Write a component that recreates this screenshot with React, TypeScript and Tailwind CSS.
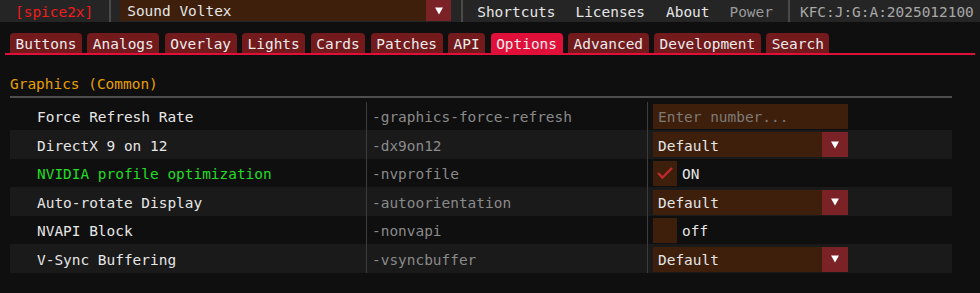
import React from 'react';

const tabs = ['Buttons', 'Analogs', 'Overlay', 'Lights', 'Cards', 'Patches', 'API', 'Options', 'Advanced', 'Development', 'Search'];

type Row = {
  name: string;
  param: string;
  kind: 'input' | 'combo' | 'check';
  value?: string;
  on?: boolean;
  green?: boolean;
};

const rows: Row[] = [
  { name: 'Force Refresh Rate', param: '-graphics-force-refresh', kind: 'input' },
  { name: 'DirectX 9 on 12', param: '-dx9on12', kind: 'combo', value: 'Default' },
  { name: 'NVIDIA profile optimization', param: '-nvprofile', kind: 'check', on: true, green: true },
  { name: 'Auto-rotate Display', param: '-autoorientation', kind: 'combo', value: 'Default' },
  { name: 'NVAPI Block', param: '-nonvapi', kind: 'check', on: false },
  { name: 'V-Sync Buffering', param: '-vsyncbuffer', kind: 'combo', value: 'Default' },
];

function Arrow() {
  return (
    <div className="flex w-[26px] h-full items-center justify-center bg-[#7a2226]">
      <svg width="10" height="8" viewBox="0 0 10 8">
        <polygon points="1,0.5 9,0.5 5,7.5" fill="#ffffff" />
      </svg>
    </div>
  );
}

function Combo({ value }: { value: string }) {
  return (
    <div className="flex h-[25px] w-[195px] bg-[#3d1f0c]">
      <div className="flex-1 flex items-center pl-[5px] pt-[2px] text-[#e6e6e6]">{value}</div>
      <Arrow />
    </div>
  );
}

function Control({ row }: { row: Row }) {
  if (row.kind === 'input') {
    return (
      <div className="flex h-[25px] w-[195px] items-center bg-[#3d1f0c] pl-[5px] pt-[2px] text-[#7f7a76]">
        Enter number...
      </div>
    );
  }
  if (row.kind === 'combo') {
    return <Combo value={row.value || ''} />;
  }
  return (
    <div className="flex items-center">
      <div className="flex h-[25px] w-[24px] items-center justify-center bg-[#3d1f0c]">
        {row.on && (
          <svg width="18" height="14" viewBox="0 0 18 14">
            <polyline points="2,7 6.5,11.5 16,2" fill="none" stroke="#c02a2e" strokeWidth="2.4" />
          </svg>
        )}
      </div>
      <span className="ml-[5px] pt-[2px] text-[#e6e6e6]">{row.on ? 'ON' : 'off'}</span>
    </div>
  );
}

export default function App() {
  return (
    <div
      className="w-[980px] h-[293px] overflow-hidden bg-[#0f0f0f] text-[14.45px] leading-none"
      style={{ fontFamily: '"DejaVu Sans Mono", "Liberation Mono", monospace' }}
    >
      {/* menu bar */}
      <div className="flex h-[22px] items-stretch bg-[#252525] text-[#e6e6e6]">
        <div className="flex items-center pl-[15px] pt-[2px] text-[#f01c1c]">[spice2x]</div>
        <div className="ml-[16px] w-[2px] bg-[#4a4a4a]" />
        <div className="ml-[9px] flex h-[21px] w-[331px] bg-[#3d1f0c]">
          <div className="flex-1 flex items-center pl-[7px] pt-[2px]">Sound Voltex</div>
          <div className="flex w-[25px] items-center justify-center bg-[#7a2226]">
            <svg width="10" height="8" viewBox="0 0 10 8">
              <polygon points="1,0.5 9,0.5 5,7.5" fill="#ffffff" />
            </svg>
          </div>
        </div>
        <div className="ml-[10px] w-[2px] bg-[#4a4a4a]" />
        <div className="ml-[14px] flex items-center pt-[2px]">Shortcuts</div>
        <div className="ml-[20px] flex items-center pt-[2px]">Licenses</div>
        <div className="ml-[21px] flex items-center pt-[2px]">About</div>
        <div className="ml-[20px] flex items-center pt-[2px] text-[#9a9a9a]">Power</div>
        <div className="ml-[15px] w-[2px] bg-[#4a4a4a]" />
        <div className="ml-[10px] flex items-center pt-[2px] text-[#a8a8a8]">KFC:J:G:A:2025012100</div>
      </div>

      {/* tabs */}
      <div className="mt-[11px] flex gap-[5.5px] px-[10px]">
        {tabs.map(t => (
          <div
            key={t}
            className={`flex h-[20px] items-center rounded-t-[4px] px-[5.5px] pt-[2px] text-[#ececec] ${
              t === 'Options' ? 'bg-[#e0103a]' : 'bg-[#731a1d]'
            }`}
          >
            {t}
          </div>
        ))}
      </div>
      <div className="mx-[5px] h-[2px] bg-[#e0103a]" />

      {/* section */}
      <div className="mt-[21px] flex h-[16px] items-center pl-[10px] pt-[1px] text-[#e8a000]">Graphics (Common)</div>
      <div className="mx-[10px] mt-[4px] h-[2px] w-[942px] bg-[#4e4e4e]" />

      <div className="mt-[3.5px] ml-[10px] w-[942px]">
        {rows.map((r, i) => (
          <div key={r.name} className={`flex h-[28.6px] items-stretch ${i % 2 === 1 ? 'bg-[#1a1a1a]' : ''}`}>
            <div className={`flex w-[356px] items-center pl-[27px] pt-[3px] ${r.green ? 'text-[#22dd22]' : 'text-[#e6e6e6]'}`}>
              {r.name}
            </div>
            <div className="flex w-[281px] items-center border-l border-[#3c3c3c] pl-[5px] pt-[3px] text-[#8a8a8a]">
              {r.param}
            </div>
            <div className="flex flex-1 items-center border-l border-[#3c3c3c] pl-[5px] pt-[1px]">
              <Control row={r} />
            </div>
          </div>
        ))}
      </div>
    </div>
  );
}
